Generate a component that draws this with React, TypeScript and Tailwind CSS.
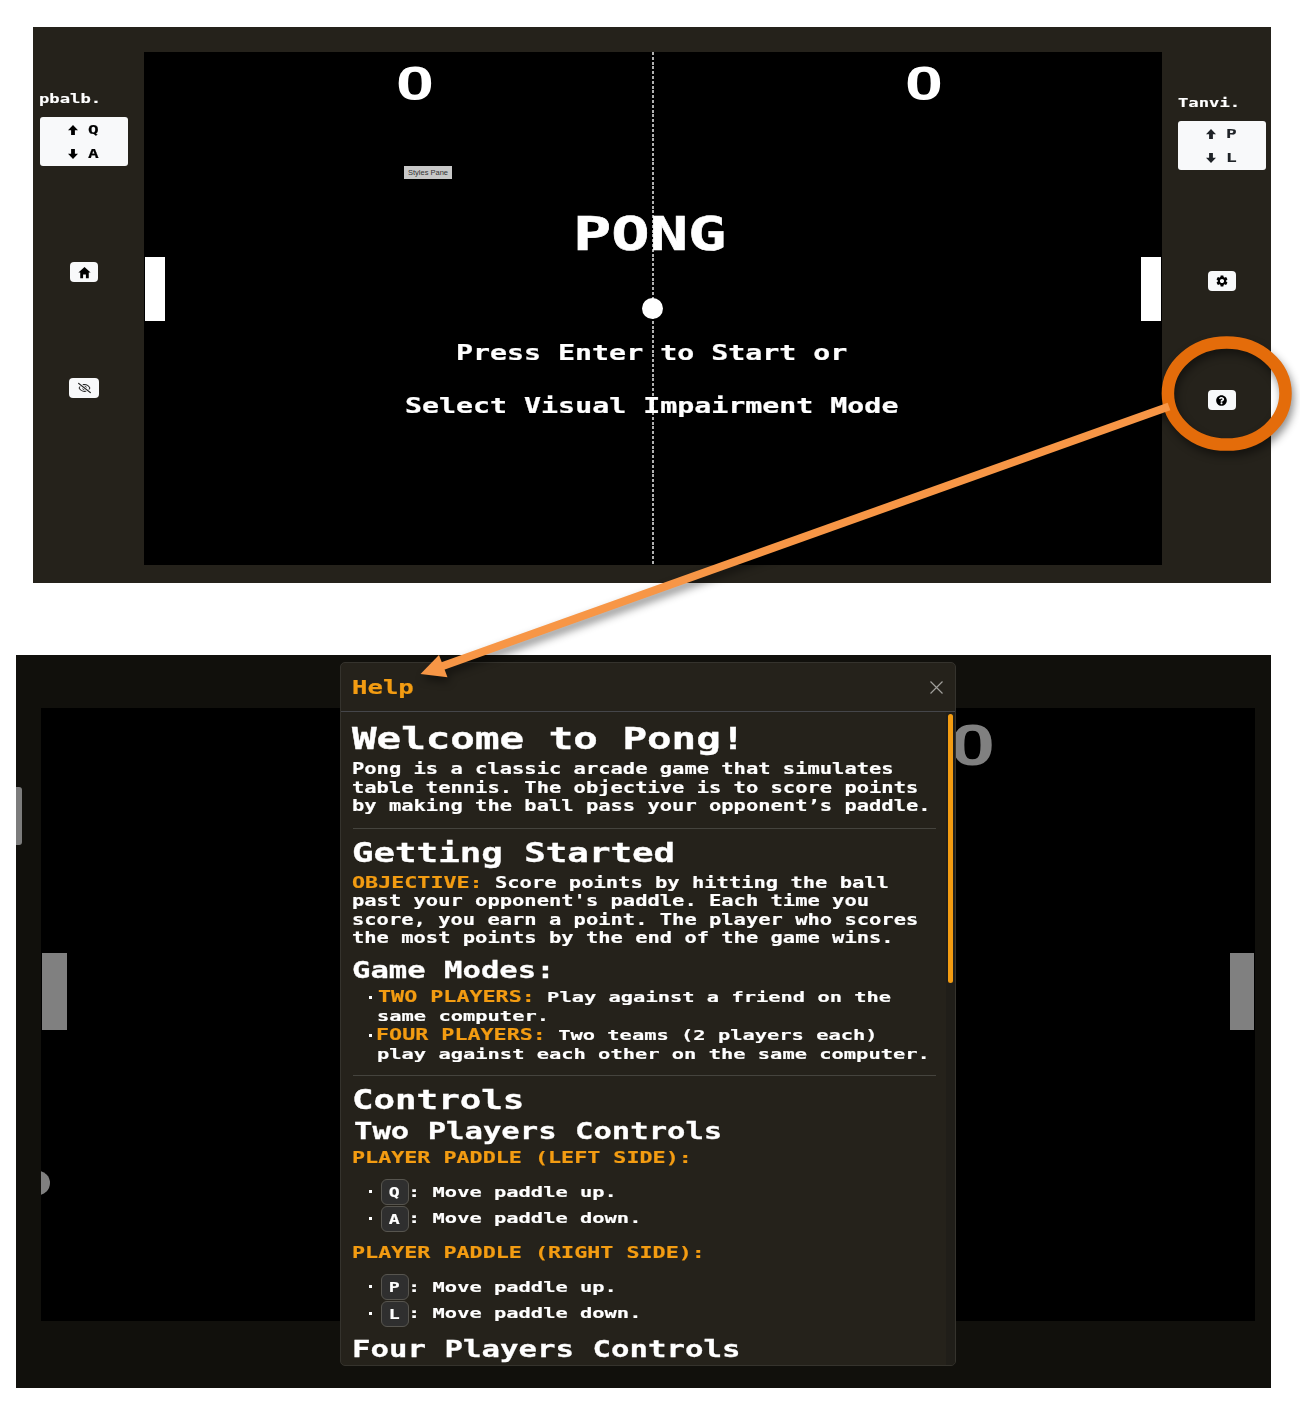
import type { ReactNode } from "react";
import { FaQuestionCircle, FaRegEyeSlash } from "react-icons/fa";
import { IoMdHome } from "react-icons/io";
import { MdSettings } from "react-icons/md";

const PIXEL = "font-['DejaVu_Sans_Mono','Liberation_Mono',monospace] font-bold [-webkit-text-stroke:0.012em_currentColor]";

// Wide monospace lettering: each row is stretched horizontally from its left edge.
function Wide({ children, className = "" }: { children: ReactNode; className?: string }) {
  return (
    <div className={`${PIXEL} block w-max origin-left scale-x-[1.366] whitespace-pre ${className}`}>
      {children}
    </div>
  );
}

function Score({ className }: { className: string }) {
  return (
    <div
      className={`absolute origin-left scale-x-[1.42] font-['Liberation_Sans',Arial,sans-serif] leading-none font-bold ${className}`}
    >
      0
    </div>
  );
}

function Arrow({ down = false }: { down?: boolean }) {
  return (
    <svg viewBox="0 0 10 10" className={`h-[10px] w-[10px] ${down ? "rotate-180" : ""}`} fill="currentColor">
      <path d="M5 0 L10 5.2 H6.9 V10 H3.1 V5.2 H0 Z" />
    </svg>
  );
}

function KeyCard({ up, down, className = "" }: { up: string; down: string; className?: string }) {
  return (
    <div className={`flex h-[49px] w-[88px] flex-col justify-center rounded-[3px] bg-[#f8f9fa] ${className}`}>
      {[up, down].map((key, i) => (
        <div key={key} className="flex h-6 items-center pl-7">
          <Arrow down={i === 1} />
          <span className="w-[10px]" />
          <Wide className="text-[13px] leading-6">{key}</Wide>
        </div>
      ))}
    </div>
  );
}

function IconButton({ children, className = "" }: { children: ReactNode; className?: string }) {
  return (
    <button
      className={`flex h-5 w-7 items-center justify-center rounded-[4px] bg-[#f8f9fa] text-black ${className}`}
    >
      {children}
    </button>
  );
}

function GamePanel() {
  return (
    <section className="ml-[33px] flex h-[556px] w-[1238px] bg-[#25221b]">
      <aside className="flex w-[111px] shrink-0 flex-col pt-[63px] pl-[7px] text-white">
        <Wide className="-ml-px text-[12.6px] leading-[17px]">pbalb.</Wide>
        <KeyCard up="Q" down="A" className="mt-[10px] text-black" />
        <IconButton className="mt-[96px] ml-[30px]">
          <IoMdHome className="h-[15px] w-[15px]" />
        </IconButton>
        <IconButton className="mt-[96px] ml-[29px] w-[30px]">
          <FaRegEyeSlash className="h-[12px] w-[13px] text-[#222]" />
        </IconButton>
      </aside>
      <div className="relative mt-[25px] h-[513px] w-[1018px] shrink-0 overflow-hidden bg-black text-white">
        <div className="absolute top-0 left-[508px] h-full w-[2px] bg-[repeating-linear-gradient(to_bottom,#b0b0b0_0_3px,#000_3px_4.8px)]" />
        <Score className="top-[8px] left-[252px] text-[48px]" />
        <Score className="top-[8px] left-[761px] text-[48px]" />
        <div className="absolute top-[114px] left-[260px] flex h-[13px] w-[48px] items-center justify-center bg-[#c8c8c8] font-['Liberation_Sans',Arial,sans-serif] text-[7.5px] text-[#333]">
          Styles Pane
        </div>
        <Wide className="absolute top-[158.5px] left-[428.5px] text-[46.6px] leading-none">PONG</Wide>
        <div className="absolute top-[205px] left-[1px] h-[64px] w-[20px] bg-white" />
        <div className="absolute top-[205px] left-[997px] h-[64px] w-[20px] bg-white" />
        <div className="absolute top-[246px] left-[498px] h-[21px] w-[21px] rounded-full bg-white" />
        <Wide className="absolute top-[291px] left-[311.5px] text-[20.7px] leading-none">
          Press Enter to Start or
        </Wide>
        <Wide className="absolute top-[344px] left-[261px] text-[20.7px] leading-none">
          Select Visual Impairment Mode
        </Wide>
      </div>
      <aside className="flex w-[109px] shrink-0 flex-col pt-[67px] pl-[15.5px] text-white">
        <Wide className="text-[12.6px] leading-[17px]">Tanvi.</Wide>
        <KeyCard up="P" down="L" className="mt-[10px] text-[#1f2327]" />
        <IconButton className="mt-[101px] ml-[30px]">
          <MdSettings className="h-[14px] w-[14px]" />
        </IconButton>
        <IconButton className="mt-[99px] ml-[30px]">
          <FaQuestionCircle className="h-[11px] w-[11px]" />
        </IconButton>
      </aside>
    </section>
  );
}

function Term({ children }: { children: ReactNode }) {
  return <span className="text-[15.9px] text-[#f39c12]">{children}</span>;
}

function KeyRow({ label, children }: { label: string; children: ReactNode }) {
  return (
    <li className="flex h-[26.4px] items-center pl-[17px]">
      <span className="h-[3px] w-[3px] bg-white" />
      <kbd className="mt-px ml-[9px] flex h-[26px] w-[28px] shrink-0 items-center justify-center rounded-[6px] border border-[#57554f] bg-[#2f2f2f]">
        <span className={`${PIXEL} scale-x-[1.3] text-[14px] leading-none`}>{label}</span>
      </kbd>
      <Wide className="-ml-px text-[14.95px] leading-[26px]">: {children}</Wide>
    </li>
  );
}

function HelpDialog() {
  return (
    <div className="absolute top-[7px] left-[324px] flex h-[704px] w-[616px] flex-col overflow-hidden rounded-[5px] border border-[#35332d] bg-[#25221b] text-white">
      <header className="flex h-[49px] shrink-0 items-center justify-between border-b border-[#45464a] pr-[12px] pl-[11px]">
        <Wide className="mt-[2px] text-[18.8px] leading-[22px] text-[#f39c12]">Help</Wide>
        <svg viewBox="0 0 13 13" className="h-[13px] w-[13px]" stroke="#a09f9b" strokeWidth="1.2">
          <path d="M0.5 0.5 L12.5 12.5 M12.5 0.5 L0.5 12.5" />
        </svg>
      </header>
      <div className="flex min-h-0 flex-1">
        <main className="w-[606px] overflow-hidden pl-[10.5px]">
          <Wide className="mt-[12px] text-[29.9px] leading-[30px]">Welcome to Pong!</Wide>
          <div className="mt-[6px] text-[14.97px] leading-[18.7px]">
            <Wide>Pong is a classic arcade game that simulates</Wide>
            <Wide>table tennis. The objective is to score points</Wide>
            <Wide>by making the ball pass your opponent’s paddle.</Wide>
          </div>
          <hr className="mt-[11.5px] ml-px w-[583px] border-[#45443e]" />
          <Wide className="mt-[11.5px] text-[26.2px] leading-[26px]">Getting Started</Wide>
          <div className="mt-[7.5px] text-[14.97px] leading-[18.6px]">
            <Wide className="h-[18.6px]">
              <Term>OBJECTIVE:</Term> Score points by hitting the ball
            </Wide>
            <Wide>past your opponent's paddle. Each time you</Wide>
            <Wide>score, you earn a point. The player who scores</Wide>
            <Wide>the most points by the end of the game wins.</Wide>
          </div>
          <Wide className="mt-[11px] text-[22.4px] leading-[22px]">Game Modes:</Wide>
          <ul className="mt-[7.5px] text-[14.95px] leading-[18.8px]">
            <li>
              <div className="flex h-[18.8px] items-center pl-[17px]">
                <span className="mr-[6.5px] h-[3px] w-[3px] bg-white" />
                <Wide>
                  <Term>TWO PLAYERS:</Term> Play against a friend on the
                </Wide>
              </div>
              <Wide className="ml-[25px]">same computer.</Wide>
            </li>
            <li>
              <div className="flex h-[18.8px] items-center pl-[17px]">
                <span className="mr-[4.5px] h-[3px] w-[3px] bg-white" />
                <Wide>
                  <Term>FOUR PLAYERS:</Term> Two teams (2 players each)
                </Wide>
              </div>
              <Wide className="ml-[25px]">play against each other on the same computer.</Wide>
            </li>
          </ul>
          <hr className="mt-[11px] ml-px w-[583px] border-[#45443e]" />
          <Wide className="mt-[11px] text-[26.2px] leading-[26px]">Controls</Wide>
          <Wide className="mt-[7px] ml-[2px] text-[22.4px] leading-[22px]">Two Players Controls</Wide>
          <Wide className="mt-[7.5px] text-[15.9px] leading-[18px] text-[#f39c12]">PLAYER PADDLE (LEFT SIDE):</Wide>
          <ul className="mt-[11.5px]">
            <KeyRow label="Q">Move paddle up.</KeyRow>
            <KeyRow label="A">Move paddle down.</KeyRow>
          </ul>
          <Wide className="mt-[12.5px] text-[15.9px] leading-[18px] text-[#f39c12]">
            PLAYER PADDLE (RIGHT SIDE):
          </Wide>
          <ul className="mt-[11.5px]">
            <KeyRow label="P">Move paddle up.</KeyRow>
            <KeyRow label="L">Move paddle down.</KeyRow>
          </ul>
          <Wide className="mt-[12px] text-[22.5px] leading-[22px]">Four Players Controls</Wide>
        </main>
        <div className="flex w-[9px] shrink-0 justify-center bg-[#201e19] pt-[2px]">
          <div className="h-[269px] w-[4.5px] rounded-full bg-[#f39c12]" />
        </div>
      </div>
    </div>
  );
}

function HelpPanel() {
  return (
    <section className="relative mt-[72px] ml-[16px] h-[733px] w-[1255px] bg-[#11100c]">
      <div className="absolute top-[132px] left-0 h-[58px] w-[6px] rounded-r-[3px] bg-[#7c7c7c]" />
      <div className="ml-[25px] h-full w-[1214px] pt-[53px]">
        <div className="relative h-[613px] overflow-hidden bg-black text-[#808080]">
          <Score className="top-[9px] left-[909px] text-[57px]" />
          <div className="absolute top-[245px] left-[1px] h-[77px] w-[24.5px] bg-[#808080]" />
          <div className="absolute top-[245px] left-[1188.5px] h-[77px] w-[24.5px] bg-[#808080]" />
          <div className="absolute top-[463px] left-[-15px] h-[24px] w-[24px] rounded-full bg-[#808080]" />
        </div>
      </div>
      <HelpDialog />
    </section>
  );
}

export default function App() {
  return (
    <div className="relative h-[1408px] w-[1300px] overflow-hidden bg-white pt-[27px]">
      <GamePanel />
      <HelpPanel />
      <svg
        viewBox="0 0 1300 1408"
        className="pointer-events-none absolute inset-0 h-[1408px] w-[1300px] drop-shadow-[2px_5px_4px_rgba(0,0,0,0.45)]"
        fill="none"
      >
        <ellipse cx="1226.7" cy="393.6" rx="58.8" ry="51" stroke="#e46c0a" strokeWidth="12.5" />
        <path d="M1169 406.5 L440 667" stroke="#f79646" strokeWidth="8" />
        <path d="M420.5 674 L439 655 L447.5 677.3 Z" fill="#f79646" />
      </svg>
    </div>
  );
}
